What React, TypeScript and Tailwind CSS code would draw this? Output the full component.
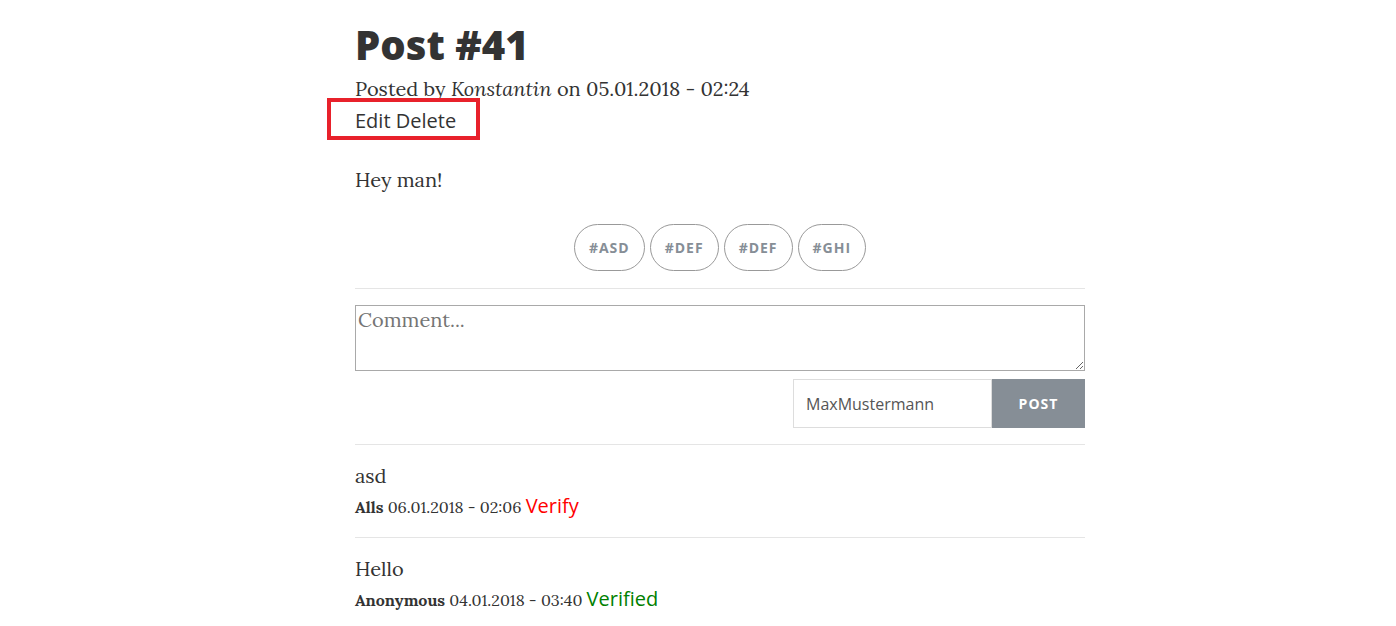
import React from 'react';

const serif = "font-['Lora','Liberation_Serif',serif]";
const sans = "font-['Open_Sans','Liberation_Sans',sans-serif]";

const tags = ['#asd', '#def', '#def', '#ghi'];

const comments = [
  { text: 'asd', author: 'Alls', date: '06.01.2018 - 02:06', verified: false },
  { text: 'Hello', author: 'Anonymous', date: '04.01.2018 - 03:40', verified: true },
];

const App: React.FC = () => {
  return (
    <div className="min-h-screen bg-white text-[#333]">
      <div className="w-[730px] ml-[355px] pt-[20px]">
        <h1 className={`${sans} text-[40px] font-extrabold leading-[50px] text-[#333]`}>Post #41</h1>
        <p className={`${serif} text-[20px] leading-[26px] mt-[6px]`}>
          Posted by <i>Konstantin</i> on 05.01.2018 - 02:24
        </p>
        <div className="relative inline-block mt-[5px]">
          <div className={`${sans} text-[20px] leading-[28px] text-[#333]`}>
            <a href="#">Edit</a> <a href="#">Delete</a>
          </div>
          {/* annotation box */}
          <div className="absolute left-[-28px] top-[-9px] w-[153px] h-[42px] border-4 border-[#e8212b] pointer-events-none" />
        </div>
        <p className={`${serif} text-[20px] leading-[26px] mt-[32px]`}>Hey man!</p>

        <div className="flex justify-center gap-[5px] mt-[31px]">
          {tags.map((t, i) => (
            <span
              key={i}
              className={`${sans} h-[47px] px-[14px] flex items-center rounded-full border border-[#999] text-[14px] font-bold uppercase tracking-[1px] text-[#868e96]`}
            >
              {t}
            </span>
          ))}
        </div>

        <div className="border-t border-[#e5e5e5] mt-[17px]" />

        <textarea
          placeholder="Comment..."
          className={`${serif} mt-[16px] block w-full h-[66px] border border-[#a9a9a9] px-[2px] py-[1px] text-[20px] leading-[26px] placeholder:text-[#757575] resize-y`}
        />

        <div className="flex justify-end mt-[8px]">
          <input
            defaultValue="MaxMustermann"
            className={`${sans} w-[199px] h-[49px] border border-[#ddd] px-[12px] text-[16px] text-[#555]`}
          />
          <button className={`${sans} w-[93px] h-[49px] bg-[#868e96] text-white text-[14px] font-bold uppercase tracking-[1px]`}>
            Post
          </button>
        </div>

        <div className="border-t border-[#e5e5e5] mt-[16px]" />

        {comments.map((c, i) => (
          <div key={i}>
            {i > 0 && <div className="border-t border-[#e5e5e5] mt-[16px]" />}
            <p className={`${serif} text-[20px] leading-[26px] mt-[18px]`}>{c.text}</p>
            <p className={`${serif} text-[16px] leading-[28px] mt-[3px]`}>
              <b>{c.author}</b> {c.date}{' '}
              <span className={`${sans} text-[20px] ${c.verified ? 'text-[#008000]' : 'text-[#ff0000]'}`}>
                {c.verified ? 'Verified' : 'Verify'}
              </span>
            </p>
          </div>
        ))}
      </div>
    </div>
  );
};

export default App;
